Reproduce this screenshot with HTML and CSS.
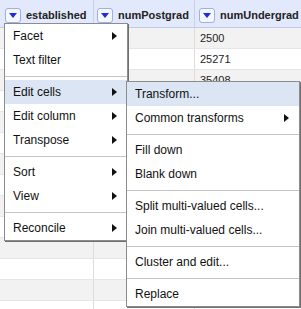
FILE: index.html
```html
<!DOCTYPE html>
<html lang="en">
<head>
    <meta charset="UTF-8">
    <meta name="viewport" content="width=device-width, initial-scale=1.0">
    <title>Edit cells menu</title>
    <link rel="stylesheet" href="styles.css">
</head>
<body>
    <div class="grid">
        <div class="head">
            <div class="hcell col1"><span class="drop"><svg width="8" height="5" viewBox="0 0 8 5"><polygon points="0,0 8,0 4,5" /></svg></span>established</div>
            <div class="hcell col2"><span class="drop"><svg width="8" height="5" viewBox="0 0 8 5"><polygon points="0,0 8,0 4,5" /></svg></span>numPostgrad</div>
            <div class="hcell col3"><span class="drop"><svg width="8" height="5" viewBox="0 0 8 5"><polygon points="0,0 8,0 4,5" /></svg></span>numUndergrad</div>
        </div>
        <div class="row odd"><div class="cell col1"></div><div class="cell col2"></div><div class="cell col3">2500</div></div>
        <div class="row"><div class="cell col1"></div><div class="cell col2"></div><div class="cell col3">25271</div></div>
        <div class="row odd"><div class="cell col1"></div><div class="cell col2"></div><div class="cell col3">35408</div></div>
        <div class="row"><div class="cell col1"></div><div class="cell col2"></div><div class="cell col3"></div></div>
        <div class="row odd"><div class="cell col1"></div><div class="cell col2"></div><div class="cell col3"></div></div>
        <div class="row"><div class="cell col1"></div><div class="cell col2"></div><div class="cell col3"></div></div>
        <div class="row odd"><div class="cell col1"></div><div class="cell col2"></div><div class="cell col3"></div></div>
        <div class="row"><div class="cell col1"></div><div class="cell col2"></div><div class="cell col3"></div></div>
        <div class="row odd"><div class="cell col1"></div><div class="cell col2"></div><div class="cell col3"></div></div>
        <div class="row"><div class="cell col1"></div><div class="cell col2"></div><div class="cell col3"></div></div>
        <div class="row odd"><div class="cell col1"></div><div class="cell col2"></div><div class="cell col3"></div></div>
        <div class="row"><div class="cell col1"></div><div class="cell col2"></div><div class="cell col3"></div></div>
        <div class="row odd"><div class="cell col1"></div><div class="cell col2"></div><div class="cell col3"></div></div>
        <div class="row"><div class="cell col1"></div><div class="cell col2"></div><div class="cell col3"></div></div>
    </div>

    <div class="menu main-menu">
        <div class="item">Facet <span class="arrow"></span></div>
        <div class="item">Text filter</div>
        <div class="sep"></div>
        <div class="item active">Edit cells <span class="arrow"></span></div>
        <div class="item">Edit column <span class="arrow"></span></div>
        <div class="item">Transpose <span class="arrow"></span></div>
        <div class="sep"></div>
        <div class="item">Sort <span class="arrow"></span></div>
        <div class="item">View <span class="arrow"></span></div>
        <div class="sep"></div>
        <div class="item">Reconcile <span class="arrow"></span></div>
    </div>

    <div class="menu sub-menu">
        <div class="item active">Transform...</div>
        <div class="item">Common transforms <span class="arrow"></span></div>
        <div class="sep"></div>
        <div class="item">Fill down</div>
        <div class="item">Blank down</div>
        <div class="sep"></div>
        <div class="item">Split multi-valued cells...</div>
        <div class="item">Join multi-valued cells...</div>
        <div class="sep"></div>
        <div class="item">Cluster and edit...</div>
        <div class="sep"></div>
        <div class="item">Replace</div>
    </div>
</body>
</html>
```

FILE: styles.css
```css
body {
    margin: 0;
    padding: 0;
    width: 301px;
    height: 309px;
    overflow: hidden;
    position: relative;
    background: #fff;
    font-family: "Liberation Sans", Arial, sans-serif;
    color: #222;
}

.head {
    display: flex;
    height: 28px;
    box-sizing: border-box;
    background: #e3e9fc;
    border-bottom: 1px solid #c3cbe6;
}

.hcell {
    display: flex;
    align-items: center;
    padding-top: 3px;
    box-sizing: border-box;
    font-size: 11px;
    font-weight: bold;
    color: #222;
}

.col1 {
    width: 93px;
    padding-left: 5px;
}

.col2 {
    width: 101px;
    padding-left: 3px;
    border-left: 1px solid #c8d0ea;
}

.col3 {
    flex: 1;
    padding-left: 4px;
    border-left: 1px solid #c8d0ea;
}

.drop {
    display: inline-flex;
    align-items: center;
    justify-content: center;
    width: 14px;
    height: 13px;
    margin-right: 5px;
    border: 1px solid #9eaee6;
    border-radius: 3px;
    background: #f5f7ff;
}

.drop svg {
    fill: #1d2be0;
}

.row {
    display: flex;
    height: 21px;
    box-sizing: border-box;
    border-bottom: 1px solid #e6e6e6;
    background: #fff;
}

.row.odd {
    background: #f2f2f2;
}

.cell {
    box-sizing: border-box;
    font-size: 11px;
    line-height: 20px;
}

.row .col2,
.row .col3 {
    border-left: 1px solid #dcdcdc;
}

.row .col3 {
    padding-left: 5px;
}

.menu {
    position: absolute;
    box-sizing: border-box;
    background: #fff;
    border: 1px solid #8c8c8c;
    box-shadow: 1px 1px 0 #707070;
    font-size: 12px;
    color: #111;
}

.main-menu {
    left: 4px;
    top: 23px;
    width: 124px;
}

.sub-menu {
    left: 126px;
    top: 81px;
    width: 174px;
}

.item {
    display: flex;
    justify-content: space-between;
    align-items: center;
    height: 24px;
    padding: 0 10px 0 8px;
    box-sizing: border-box;
}

.item.active {
    background: #dbe5f4;
}

.arrow {
    width: 0;
    height: 0;
    border-left: 5px solid #111;
    border-top: 4px solid transparent;
    border-bottom: 4px solid transparent;
}

.sep {
    border-top: 1px solid #c4c4c4;
    margin: 4px 0 3px;
}
```
